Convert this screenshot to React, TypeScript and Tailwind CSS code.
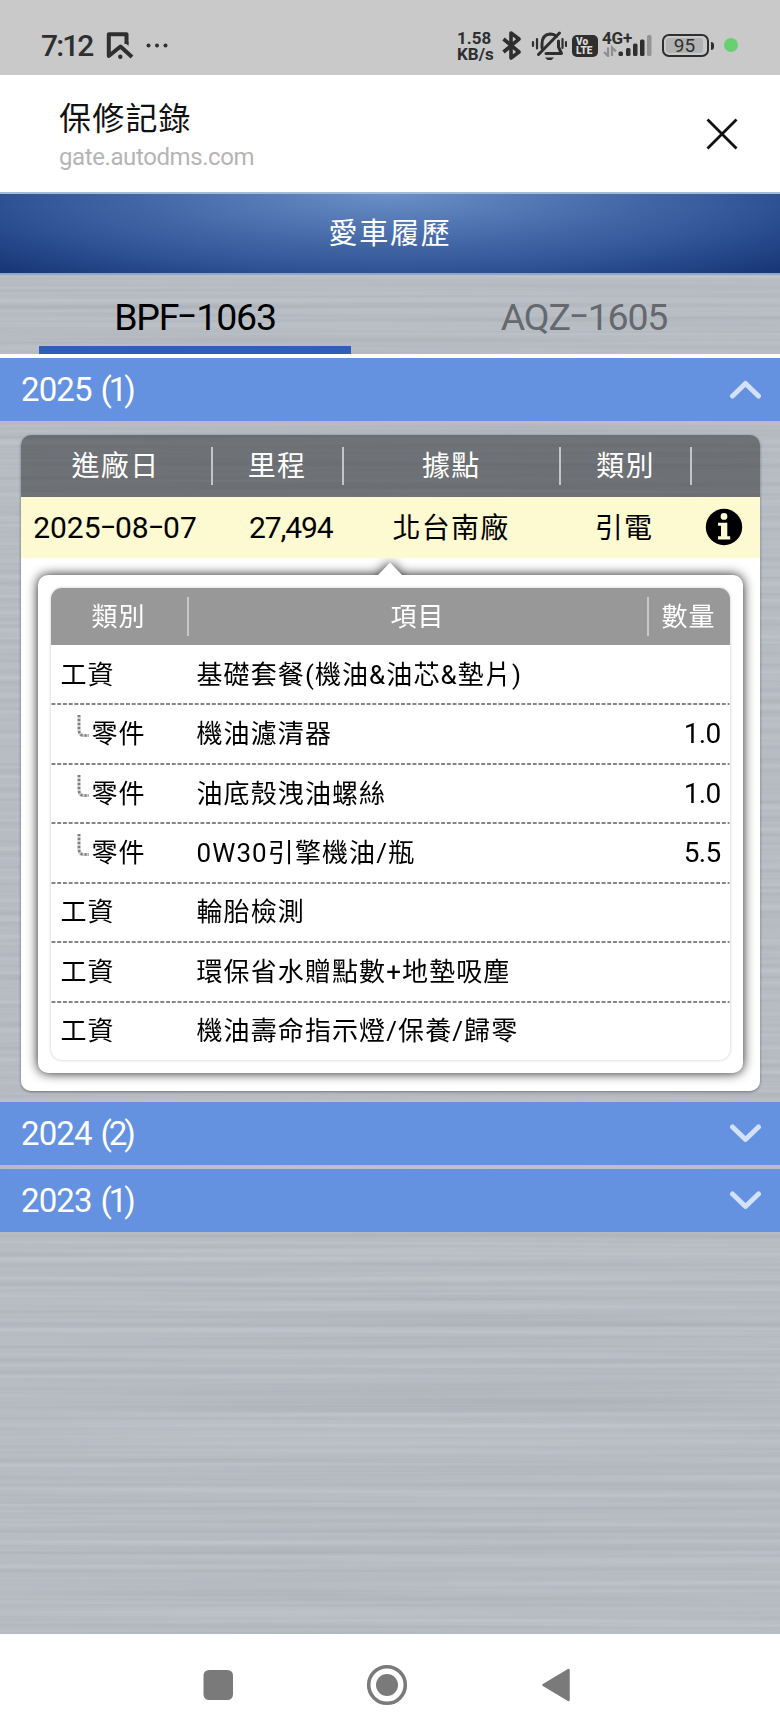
import React from "react";

type Line = { kind: string; item: string; qty?: string; part?: boolean };

const LINES: Line[] = [
  { kind: "工資", item: "基礎套餐(機油&油芯&墊片)" },
  { kind: "零件", item: "機油濾清器", qty: "1.0", part: true },
  { kind: "零件", item: "油底殼洩油螺絲", qty: "1.0", part: true },
  { kind: "零件", item: "0W30引擎機油/瓶", qty: "5.5", part: true },
  { kind: "工資", item: "輪胎檢測" },
  { kind: "工資", item: "環保省水贈點數+地墊吸塵" },
  { kind: "工資", item: "機油壽命指示燈/保養/歸零" },
];

function Dashed({ text }: { text: string }) {
  return (
    <>
      {text.split("-").map((part, i) => (
        <React.Fragment key={i}>
          {i > 0 && (
            <span className="inline-block w-[0.48em] -translate-y-[0.07em] scale-x-[1.65] text-center tracking-normal">-</span>
          )}
          {part}
        </React.Fragment>
      ))}
    </>
  );
}

function StatusBar() {
  return (
    <header className="flex h-[75px] shrink-0 items-start bg-[#c9c9c9] pl-[41px] pt-[30px] text-[#2f2f2f]">
      <span className="w-[65px] text-[30px] font-medium leading-[31px] tracking-[-1.900px]">7:12</span>
      <svg className="mt-[1px] h-[30px] w-[72px]" viewBox="0 0 72 30" fill="none">
        <path d="M20.500 13V3.200H2.800V25L14.500 15.500L26 26" stroke="#2f2f2f" strokeWidth="4" strokeLinejoin="round" />
        <path d="M18.500 11L22.500 15V11Z" fill="#2f2f2f" />
        <circle cx="14.300" cy="25.800" r="2.200" fill="#2f2f2f" />
        <circle cx="42.500" cy="14.500" r="2" fill="#2f2f2f" />
        <circle cx="51" cy="14.500" r="2" fill="#2f2f2f" />
        <circle cx="59.500" cy="14.500" r="2" fill="#2f2f2f" />
      </svg>
      <div className="ml-[279px] mt-[1px] w-[44px] whitespace-nowrap text-[17px] font-bold leading-[15.500px] tracking-[0px]">
        1.58
        <br />
        KB/s
      </div>
      <svg className="h-[32px] w-[66px]" viewBox="0 0 66 32" fill="none" stroke="#2f2f2f">
        <path d="M2.500 9L18 22L10 28V3L18 9L2.500 22" strokeWidth="3.600" strokeLinejoin="round" />
        <g strokeWidth="3" strokeLinecap="round">
          <path d="M41 18V14C41 8 44 4.500 49 4C52 4 54 5 55.500 6.500" />
          <path d="M57.500 11V17L60.500 23.500H45" strokeLinejoin="round" />
          <path d="M37.500 24.500L58.500 3" />
        </g>
        <path d="M44 27.500H53L50.500 30H46.500Z" fill="#2f2f2f" stroke="none" />
        <path d="M32 12V16M36 9V18.500M65 12V16M61.500 9V18" strokeWidth="2.200" strokeLinecap="round" />
      </svg>
      <div className="ml-[5px] mt-[5px] flex h-[22px] w-[26px] flex-col justify-center rounded-[5px] bg-[#2f2f2f] pl-[4px] text-[10px] font-black leading-[9px] text-[#dcdcdc]">
        <span>Vo</span>
        <span>LTE</span>
      </div>
      <div className="ml-[4px] flex w-[51px] flex-col">
        <span className="h-[15px] text-[17px] font-bold leading-[16px] tracking-[-0.200px]">4G+</span>
        <svg className="-mt-[11px] h-[23px] w-[51px]" viewBox="0 0 51 23" fill="#2f2f2f">
          <path d="M6 13.500V22L2 18M10 22V13.500L14 17.500" fill="none" stroke="#8e8e8e" strokeWidth="2.200" />
          <rect x="16.500" y="17.500" width="4.500" height="4.500" rx="1.500" />
          <rect x="24" y="14" width="4.500" height="8" rx="1.500" />
          <rect x="31" y="9.500" width="4.500" height="12.500" rx="1.500" />
          <rect x="38" y="5.500" width="4.500" height="16.500" rx="1.500" />
          <rect x="45" y="1" width="4.500" height="21" rx="1.500" fill="#949494" />
        </svg>
      </div>
      <div className="ml-[9px] mt-[4px] flex h-[23px] w-[47px] rounded-[7px] border-2 border-[#2f2f2f] p-[2px]">
        <span className="flex h-full w-[37px] items-center justify-center rounded-[3px] bg-[#b2b2b2] text-[19px] font-normal leading-none">95</span>
      </div>
      <span className="ml-[2px] mt-[12px] h-[8px] w-[3px] rounded-r bg-[#2f2f2f]" />
      <span className="ml-[10px] mt-[8px] h-[14px] w-[14px] rounded-full bg-[#68d070]" />
    </header>
  );
}

function YearBar({ year, count, open = false }: { year: string; count: number; open?: boolean }) {
  return (
    <div className="flex h-[63px] shrink-0 items-center justify-between bg-[#6491e0] pl-[21px] pr-[18px] text-white">
      <span className="text-[33px] leading-none tracking-[-0.900px]">
        {year} <span className="ml-[1.500px] tracking-[-3px]">({count})</span>
      </span>
      <svg className="h-[20px] w-[33px]" viewBox="0 0 33 20" fill="none">
        <path
          d={open ? "M3.500 16L16.500 3.500L29.500 16" : "M3.500 3L16.500 15.500L29.500 3"}
          stroke="#d3e2fa"
          strokeWidth="5"
          strokeLinecap="round"
          strokeLinejoin="round"
        />
      </svg>
    </div>
  );
}

function Branch() {
  return (
    <svg className="mr-[2px] mt-[11px] h-[24px] w-[13px] self-start" viewBox="0 0 13 24" fill="none">
      <path d="M2 0V15Q2 20 6 20.500H12" stroke="#cfcfcf" strokeWidth="3.200" />
      <path d="M2 0V15Q2 20 6 20.500H12" stroke="#7d7d7d" strokeWidth="2.600" strokeDasharray="2 2" />
    </svg>
  );
}

function Brushed() {
  return (
    <svg className="absolute inset-0 h-full w-full" aria-hidden="true">
      <filter id="brushed" x="0" y="0" width="100%" height="100%" colorInterpolationFilters="sRGB">
        <feTurbulence type="fractalNoise" baseFrequency="0.0012 0.17" numOctaves="3" seed="8" />
        <feColorMatrix values="0.1 0 0 0 0.667  0.1 0 0 0 0.687  0.1 0 0 0 0.716  0 0 0 0 1" />
      </filter>
      <rect width="100%" height="100%" filter="url(#brushed)" />
    </svg>
  );
}

function VisitTable() {
  return (
    <section className="mx-auto mt-[14px] h-[656px] w-[739px] overflow-hidden rounded-[10px] shadow-[0_1px_3px_rgba(0,0,0,0.4)]">
      <div className="grid h-[62px] grid-cols-[192px_131px_217.500px_131px_67px] items-center bg-black/40 text-center text-[28px] leading-[38px] tracking-[1.300px] text-white">
        <div className="border-r-2 border-[#c3c5c7]"><span className="relative top-px">進廠日</span></div>
        <div className="border-r-2 border-[#c3c5c7]"><span className="relative top-px">里程</span></div>
        <div className="border-r-2 border-[#c3c5c7]"><span className="relative top-px">據點</span></div>
        <div className="border-r-2 border-[#c3c5c7]"><span className="relative top-px">類別</span></div>
        <div />
      </div>
      <div className="grid h-[61px] grid-cols-[192px_131px_215px_131px_67px] items-center bg-[#fdf9d0] text-center text-[28px] tracking-[1.300px] text-black">
        <div className="pr-[3px] text-[30px] tracking-normal"><Dashed text="2025-08-07" /></div>
        <div className="pr-[11px] text-right text-[30px] tracking-[-1.100px]">27,494</div>
        <div className="pt-[2px]">北台南廠</div>
        <div className="pt-[2px]">引電</div>
        <svg className="-mt-[2px] ml-[15px] h-[38px] w-[38px]" viewBox="0 0 38 38">
          <circle cx="19" cy="19" r="18.200" fill="#000" />
          <path
            d="M19 5a3.400 3.400 0 1 1 0 6.800a3.400 3.400 0 0 1 0-6.800ZM13 14.800H22.300V28.200H25.200V31.500H13V28.200H16V17.800H13Z"
            fill="#fdf9d0"
          />
        </svg>
      </div>
      <div className="h-[533px] overflow-hidden bg-white px-[17px] pt-[17px]">
        <div className="relative h-[498px] rounded-[10px] bg-white p-[13px] drop-shadow-[0_0_6px_rgba(0,0,0,0.900)]">
          <svg className="absolute -top-[13px] left-[339px] h-[14px] w-[26px]" viewBox="0 0 26 14">
            <path d="M0 14L13 0.500L26 14Z" fill="#fff" />
          </svg>
          <div className="h-[472px] overflow-hidden rounded-[11px] bg-white shadow-[0_0_3px_rgba(0,0,0,0.250)]">
            <div className="grid h-[57px] grid-cols-[138px_460px_80px] items-center bg-[#989898] text-center text-[26px] leading-[39px] tracking-[1.100px] text-white">
              <div className="border-r-2 border-[#c8c8c8]"><span className="relative top-px">類別</span></div>
              <div className="border-r-2 border-[#c8c8c8]"><span className="relative top-px">項目</span></div>
              <div><span className="relative top-px">數量</span></div>
            </div>
            {LINES.map((line, i) => (
              <div key={i} className="flex h-[59.450px] flex-col">
                <div className="grid h-[59.450px] shrink-0 grid-cols-[146px_1fr_80px] items-center text-[26px] leading-[38px] tracking-[1.100px] text-black">
                  <div className={line.part ? "flex h-full items-center pl-[26px]" : "pl-[10px]"}>
                    {line.part && <Branch />}
                    {line.kind}
                  </div>
                  <div className="whitespace-nowrap">{line.item}</div>
                  <div className="pr-[9px] text-right text-[28px] tracking-[-0.700px]">{line.qty}</div>
                </div>
                {i < LINES.length - 1 && (
                  <svg className="-mt-[1px] h-[2px] w-full shrink-0" viewBox="0 0 678 2">
                    <path d="M0 1H678" stroke="#858585" strokeWidth="1.800" strokeDasharray="3.900 1.830" />
                  </svg>
                )}
              </div>
            ))}
          </div>
        </div>
      </div>
    </section>
  );
}

export default function App() {
  return (
    <div className="flex h-[1734px] w-[780px] flex-col overflow-hidden bg-white font-['Roboto','Noto_Sans_CJK_TC',sans-serif]">
      <StatusBar />
      <div className="flex h-[117px] shrink-0 justify-between pl-[59px] pr-[42px]">
        <div className="pt-[23px]">
          <h1 className="text-[32px] leading-[42px] tracking-[1.200px] text-[#111]">保修記錄</h1>
          <p className="text-[24px] leading-[34px] tracking-[-0.400px] text-[#b5b5b5]">gate.autodms.com</p>
        </div>
        <svg className="mt-[43px] h-[32px] w-[32px]" viewBox="0 0 32 32" fill="none">
          <path d="M1.500 1.500L30.500 30.500M30.500 1.500L1.500 30.500" stroke="#111" strokeWidth="2.800" />
        </svg>
      </div>
      <div className="flex h-[83px] shrink-0 items-center justify-center border-y-2 border-t-[#a3bbdb] border-b-[#8fa5cb] bg-[radial-gradient(ellipse_farthest-corner_at_50%_0%,#6b8fc6_0%,#4d71ae_34%,#2e5294_70%,#163474_100%)] pt-[2px] text-[29px] tracking-[1.800px] text-white">
        愛車履歷
      </div>
      <main className="relative isolate flex flex-1 flex-col bg-[#b6bbc3]">
        <div className="absolute inset-0 -z-10">
          <Brushed />
        </div>
        <nav className="grid h-[79px] shrink-0 grid-cols-2 text-center text-[37.500px] tracking-[-1.200px]">
          <div className="mx-[39px] border-b-8 border-[#2f5fb7] pt-[17px] leading-[50px] text-black"><Dashed text="BPF-1063" /></div>
          <div className="pr-[2px] pt-[17px] leading-[50px] text-[#65696d]"><Dashed text="AQZ-1605" /></div>
        </nav>
        <div className="h-[4px] shrink-0 bg-white" />
        <YearBar year="2025" count={1} open />
        <VisitTable />
        <div className="mt-[11px] flex flex-col gap-[4px]">
          <YearBar year="2024" count={2} />
          <YearBar year="2023" count={1} />
        </div>
      </main>
      <footer className="flex h-[100px] shrink-0 items-start bg-white">
        <svg className="h-[100px] w-[780px]" viewBox="0 0 780 100" fill="#7a7a7a">
          <rect x="203.500" y="36" width="29.500" height="30" rx="5.500" />
          <circle cx="387" cy="51" r="18.300" fill="none" stroke="#7a7a7a" strokeWidth="3.600" />
          <circle cx="387" cy="51" r="11" />
          <path d="M543.500 51L568.500 36V66Z" stroke="#7a7a7a" strokeWidth="2.500" strokeLinejoin="round" />
        </svg>
      </footer>
    </div>
  );
}
